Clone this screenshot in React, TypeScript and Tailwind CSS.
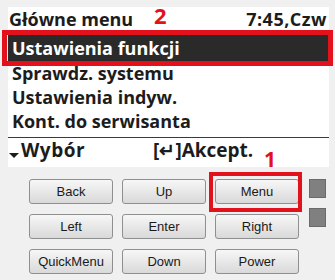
import React from 'react'

const buttons = [
  ['Back', 'Up', 'Menu'],
  ['Left', 'Enter', 'Right'],
  ['QuickMenu', 'Down', 'Power'],
]

const menuItems = ['Sprawdz. systemu', 'Ustawienia indyw.', 'Kont. do serwisanta']

function PanelButton({ label }: { label: string }) {
  return (
    <button className="flex h-[25px] w-[84px] items-center justify-center rounded-[3px] border border-[#8e8f8f] bg-gradient-to-b from-[#f7f7f7] to-[#d9d9d9] text-[13px] text-[#1a1a1a] [font-family:'Liberation_Sans',sans-serif]">
      {label}
    </button>
  )
}

export default function App() {
  return (
    <div className="relative h-[280px] w-[335px] overflow-hidden bg-[#f0f0f0] [font-family:'Open_Sans',sans-serif]">
      {/* display */}
      <div className="ml-[8px] mt-[7px] flex h-[160px] w-[321px] flex-col bg-white text-[#1c1c1c]">
        <div className="flex h-[24px] items-center justify-between pl-[1px] pr-[2px] text-[18px] font-bold leading-none">
          <span>Główne menu</span>
          <span className="tracking-[0.5px]">7:45,Czw</span>
        </div>
        <div className="mt-[4px] flex h-[26px] items-center bg-[#2a2a2a] pl-[4px] text-[18px] font-bold leading-none text-white">
          Ustawienia funkcji
        </div>
        {menuItems.map((item) => (
          <div key={item} className="flex h-[24px] items-center pl-[4px] text-[18px] font-bold leading-none">
            {item}
          </div>
        ))}
        <div className="mt-[4px] border-t border-[#3a3a3a]" />
        <div className="flex h-[24px] items-center text-[19px] font-bold leading-none">
          <span className="flex items-center pl-[1px]">
            <span className="mt-[10px] mr-[2px] h-0 w-0 border-x-[5px] border-t-[5px] border-x-transparent border-t-[#1c1c1c]" />
            <span className="tracking-[0.5px]">Wybór</span>
          </span>
          <span className="ml-[68px] flex items-center">
            <span>[↵]</span>
            <span>Akcept.</span>
          </span>
        </div>
      </div>

      {/* buttons */}
      <div className="ml-[29px] mt-[12px] flex items-start gap-[10px]">
        <div className="flex flex-col gap-[10px]">
          {buttons.map((row) => (
            <div key={row[0]} className="flex gap-[9px]">
              {row.map((b) => (
                <PanelButton key={b} label={b} />
              ))}
            </div>
          ))}
        </div>
        <div className="flex flex-col gap-[10px]">
          <div className="h-[19px] w-[17px] border border-[#6a6a6a] bg-[#808080]" />
          <div className="h-[19px] w-[17px] border border-[#6a6a6a] bg-[#808080]" />
        </div>
      </div>

      {/* annotations */}
      <div className="absolute left-[2px] top-[30px] h-[36px] w-[331px] border-[5px] border-[#e3111b]" />
      <div className="absolute left-[209px] top-[172px] h-[40px] w-[93px] border-[4px] border-[#e3111b]" />
      <span className="absolute left-[154px] top-[4px] text-[22px] font-bold leading-none text-[#e3111b]">2</span>
      <span className="absolute left-[264px] top-[149px] text-[21px] font-bold leading-none text-[#e3111b]">1</span>
    </div>
  )
}
